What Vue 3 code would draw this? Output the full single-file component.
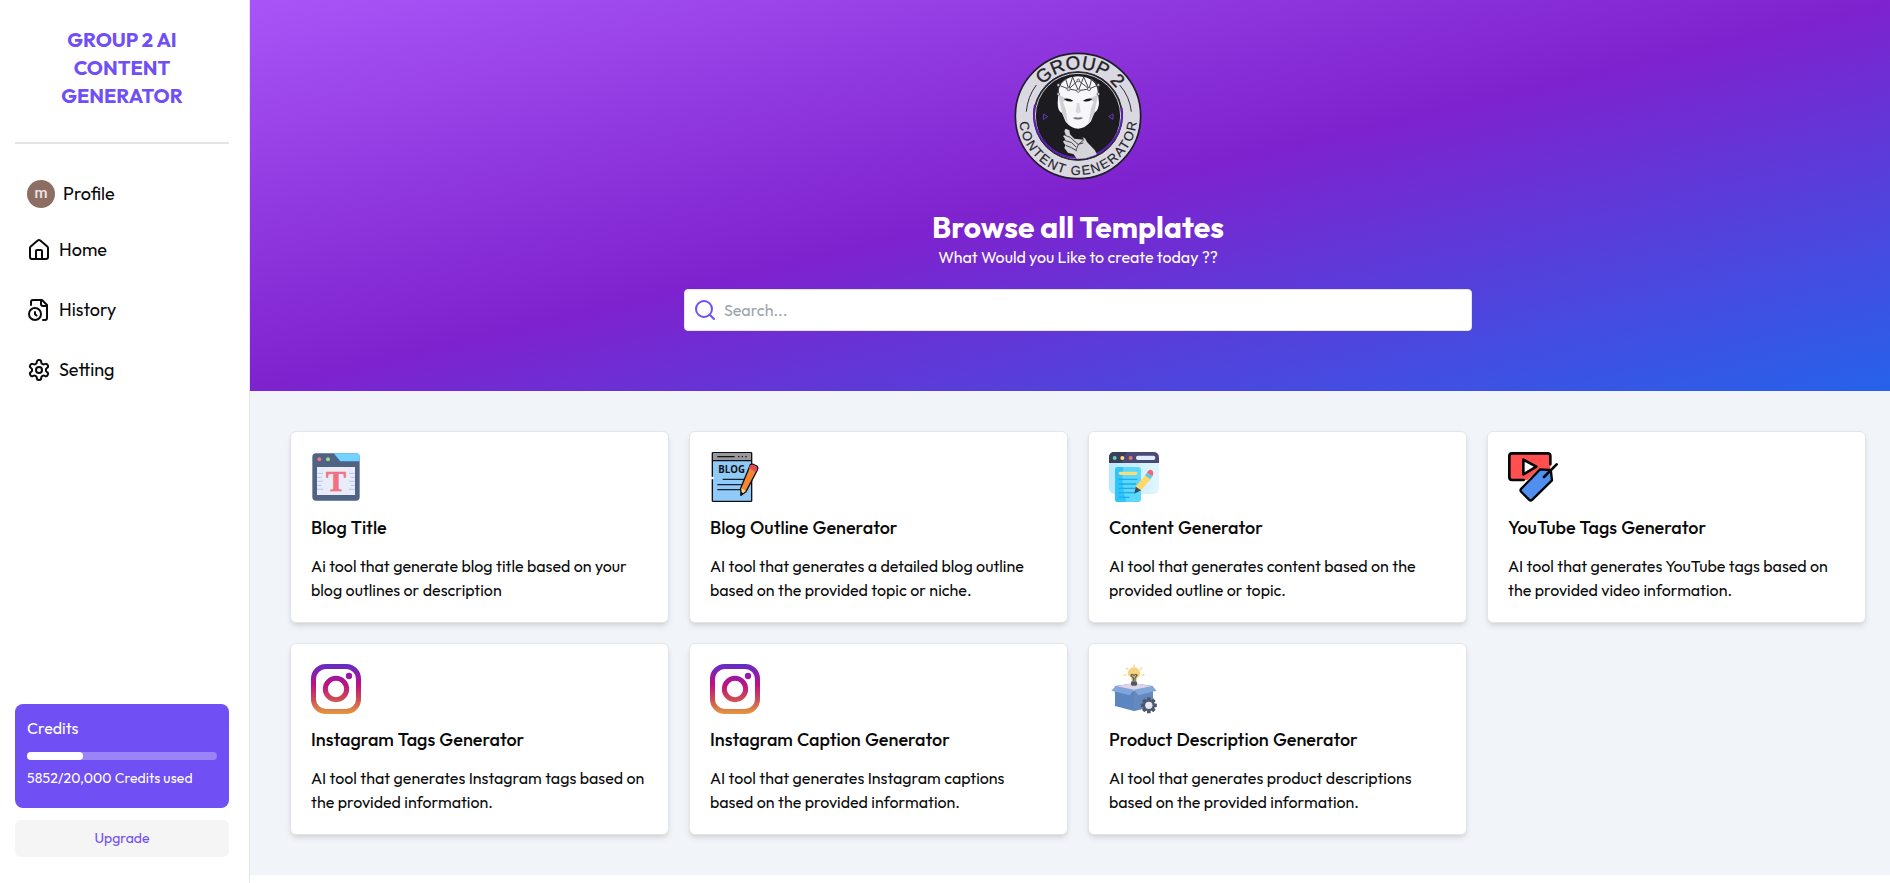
<script setup>
const nav = [
  {
    label: 'Home',
    paths: [
      'M15 21v-8a1 1 0 0 0-1-1h-4a1 1 0 0 0-1 1v8',
      'M3 10a2 2 0 0 1 .709-1.528l7-5.999a2 2 0 0 1 2.582 0l7 5.999A2 2 0 0 1 21 10v9a2 2 0 0 1-2 2H5a2 2 0 0 1-2-2z',
    ],
  },
  {
    label: 'History',
    paths: [
      'M16 22h2a2 2 0 0 0 2-2V7l-5-5H6a2 2 0 0 0-2 2v3',
      'M14 2v4a2 2 0 0 0 2 2h4',
      'M2 16a6 6 0 1 0 12 0a6 6 0 1 0-12 0',
      'M9.5 17.5 8 16.25V14',
    ],
  },
  {
    label: 'Setting',
    paths: [
      'M12.22 2h-.44a2 2 0 0 0-2 2v.18a2 2 0 0 1-1 1.73l-.43.25a2 2 0 0 1-2 0l-.15-.08a2 2 0 0 0-2.73.73l-.22.38a2 2 0 0 0 .73 2.73l.15.1a2 2 0 0 1 1 1.72v.51a2 2 0 0 1-1 1.74l-.15.09a2 2 0 0 0-.73 2.73l.22.38a2 2 0 0 0 2.73.73l.15-.08a2 2 0 0 1 2 0l.43.25a2 2 0 0 1 1 1.73V20a2 2 0 0 0 2 2h.44a2 2 0 0 0 2-2v-.18a2 2 0 0 1 1-1.73l.43-.25a2 2 0 0 1 2 0l.15.08a2 2 0 0 0 2.73-.73l.22-.39a2 2 0 0 0-.73-2.73l-.15-.08a2 2 0 0 1-1-1.74v-.5a2 2 0 0 1 1-1.74l.15-.09a2 2 0 0 0 .73-2.73l-.22-.38a2 2 0 0 0-2.73-.73l-.15.08a2 2 0 0 1-2 0l-.43-.25a2 2 0 0 1-1-1.73V4a2 2 0 0 0-2-2z',
      'M9 12a3 3 0 1 0 6 0a3 3 0 1 0-6 0',
    ],
  },
]

const credits = { used: 5852, total: 20000 }

const templates = [
  { icon: 'title', name: 'Blog Title', lines: ['Ai tool that generate blog title based on your', 'blog outlines or description'] },
  { icon: 'blog', name: 'Blog Outline Generator', lines: ['AI tool that generates a detailed blog outline', 'based on the provided topic or niche.'] },
  { icon: 'content', name: 'Content Generator', lines: ['AI tool that generates content based on the', 'provided outline or topic.'] },
  { icon: 'youtube', name: 'YouTube Tags Generator', lines: ['AI tool that generates YouTube tags based on', 'the provided video information.'] },
  { icon: 'instagram', name: 'Instagram Tags Generator', lines: ['AI tool that generates Instagram tags based on', 'the provided information.'] },
  { icon: 'instagram', name: 'Instagram Caption Generator', lines: ['AI tool that generates Instagram captions', 'based on the provided information.'] },
  { icon: 'product', name: 'Product Description Generator', lines: ['AI tool that generates product descriptions', 'based on the provided information.'] },
]

const gearTeeth = [0, 45, 90, 135, 180, 225, 270, 315]
</script>

<template>
  <div class="page">
    <aside class="sidebar">
      <h2 class="brand">GROUP 2 AI<br />CONTENT<br />GENERATOR</h2>
      <hr class="rule" />
      <nav class="nav">
        <a class="profile"><span class="avatar">m</span><span>Profile</span></a>
        <a v-for="item in nav" :key="item.label" class="nav-item">
          <svg class="nav-icon" viewBox="0 0 24 24"><path v-for="d in item.paths" :key="d" :d="d" /></svg>
          <span>{{ item.label }}</span>
        </a>
      </nav>
      <div class="usage">
        <div class="credits">
          <div class="credits-title">Credits</div>
          <div class="track"><div class="fill" :style="{ width: (credits.used / credits.total) * 100 + '%' }"></div></div>
          <div class="credits-text">{{ credits.used }}/20,000 Credits used</div>
        </div>
        <button class="upgrade">Upgrade</button>
      </div>
    </aside>

    <main class="main">
      <header class="hero">
        <svg class="logo" viewBox="40 34 390 390">
          <defs>
            <path id="arc-top" d="M94 229A141 141 0 0 1 376 229" />
            <path id="arc-bottom" d="M58 229A177 177 0 0 0 412 229" />
            <clipPath id="disc"><circle cx="235" cy="229" r="128" /></clipPath>
          </defs>
          <circle cx="235" cy="229" r="188" fill="#dad8e0" stroke="#211c2c" stroke-width="5" />
          <circle cx="235" cy="229" r="133" fill="#1c1b20" stroke="#29252f" stroke-width="3" />
          <circle cx="235" cy="229" r="128" fill="none" stroke="#d3d0da" stroke-width="3" />
          <path d="M106 195A132 132 0 1 0 366 205" fill="none" stroke="#5b1fb4" stroke-width="6" />
          <g clip-path="url(#disc)">
            <path d="M176 160Q180 112 235 110Q292 112 295 160L298 190Q297 212 284 220L274 245Q256 267 236 267Q214 266 198 246L187 220Q174 214 174 190Z" fill="#f7f7f9" />
            <path d="M176 165L187 220L205 252L198 208L190 186L205 178ZM295 165L284 220L266 252L274 208L282 186L266 178Z" fill="#d0cfd5" />
            <path d="M192 178Q207 174 221 183Q207 190 192 178ZM250 183Q264 174 279 178Q264 190 250 183Z" fill="#18171c" />
            <path d="M232 190L228 216L235 222L243 216L239 190" fill="#d9d8dc" />
            <path d="M219 235Q228 231 235 234Q243 231 251 235Q235 244 219 235Z" fill="#77747f" />
            <path d="M176 163V136L198 118L207 148L219 112L236 153L252 112L268 148L276 118L296 136V163M176 136L207 148L236 122L268 148L296 136M207 148L236 153L268 148" fill="none" stroke="#47434f" stroke-width="3" />
            <g fill="#dddbe2" stroke="#47434f" stroke-width="2">
              <circle cx="176" cy="136" r="4" /><circle cx="176" cy="163" r="4" /><circle cx="207" cy="148" r="5" /><circle cx="236" cy="153" r="5" />
              <circle cx="268" cy="148" r="5" /><circle cx="296" cy="136" r="4" /><circle cx="296" cy="163" r="4" /><circle cx="236" cy="122" r="4" />
            </g>
            <path d="M198 267L209 272L211 284L224 297L253 300L248 292L257 297L262 307L285 331L292 344L270 358H232L222 344L205 339L194 325L197 316L190 306L197 299L190 289L198 285L194 274Z" fill="#d5d4d9" />
            <path d="M196 287L212 293L235 314L251 310M194 302L216 309L229 322M198 317L215 324L232 334M253 300L236 315L229 331" fill="none" stroke="#47444d" stroke-width="3" />
          </g>
          <path d="M131 223V239L144 231ZM340 223V239L327 231Z" fill="none" stroke="#6f35bd" stroke-width="3" />
          <path d="M110 136Q84 170 80 216M360 136Q390 170 395 216" fill="none" stroke="#302c37" stroke-width="3" />
          <text class="logo-top"><textPath href="#arc-top" startOffset="51.5%" text-anchor="middle" textLength="254">GROUP 2</textPath></text>
          <text class="logo-bottom"><textPath href="#arc-bottom" startOffset="50%" text-anchor="middle" textLength="518">CONTENT GENERATOR</textPath></text>
        </svg>
        <h1>Browse all Templates</h1>
        <p>What Would you Like to create today ??</p>
        <div class="search">
          <svg viewBox="0 0 24 24"><circle cx="11" cy="11" r="8" /><path d="m21 21-4.3-4.3" /></svg>
          <input type="text" placeholder="Search..." />
        </div>
      </header>

      <section class="grid">
        <article v-for="t in templates" :key="t.name" class="card">
          <svg v-if="t.icon === 'title'" class="icon" viewBox="0 0 150 150">
            <rect x="4" y="4" width="142" height="142" rx="11" fill="#4f6384" />
            <path d="M68 4H136Q146 4 146 14V28H88Z" fill="#73d2ff" />
            <circle cx="25" cy="22" r="6" fill="#f4737f" /><circle cx="51" cy="22" r="6" fill="#a5d78a" />
            <rect x="18" y="45" width="114" height="84" fill="#e9edf9" />
            <path d="M18 64H36M18 76H32M18 88H36M18 100H32M18 112H36M114 64H132M118 76H132M114 88H132M118 100H132M114 112H132" stroke="#c0cdf0" stroke-width="4" />
            <text class="icon-t" x="75" y="116" text-anchor="middle">T</text>
          </svg>
          <svg v-else-if="t.icon === 'blog'" class="icon" viewBox="0 0 150 150">
            <rect x="7" y="2" width="118" height="146" rx="2" fill="#90caf9" stroke="#111" stroke-width="4" />
            <path d="M9 4H123V25H9Z" fill="#99999c" />
            <path d="M7 26H125M22 14H74M84 14H88M95 14H99M106 14H110" stroke="#111" stroke-width="4" />
            <path d="M3 78H12" stroke="#eaf6ff" stroke-width="7" />
            <text class="icon-blog" x="25" y="64" textLength="80">BLOG</text>
            <path d="M38 82H108M22 98H98M22 113H92" stroke="#15202b" stroke-width="4" />
            <path d="M121 38Q127 34 134 39L141 42Q145 47 142 54L108 119L93 130L92 109Z" fill="#f58634" stroke="#111" stroke-width="4" stroke-linejoin="round" />
            <path d="M121 40Q127 36 134 41Q144 45 140 54L137 59L116 49Z" fill="#e8475c" />
            <path d="M94 109L107 116L97 126Z" fill="#ffd68a" /><path d="M93 121L102 124L91 132Z" fill="#111" />
          </svg>
          <svg v-else-if="t.icon === 'content'" class="icon" viewBox="0 0 150 150">
            <defs><linearGradient id="sheet"><stop stop-color="#b9e8fd" /><stop offset="1" stop-color="#e2f5ff" /></linearGradient></defs>
            <rect width="150" height="126" rx="17" fill="url(#sheet)" />
            <path d="M0 33V17Q0 0 17 0H133Q150 0 150 17V33Z" fill="#494b75" /><path d="M0 33V17Q0 0 17 0H55Q42 15 40 33Z" fill="#3a3c60" />
            <circle cx="17" cy="18" r="6" fill="#60d98d" /><circle cx="40" cy="18" r="6" fill="#ffe07a" /><circle cx="65" cy="18" r="6" fill="#f06c76" />
            <rect x="81" y="11" width="58" height="13" rx="6" fill="#e2ecff" />
            <rect x="18" y="45" width="78" height="105" rx="10" fill="#5bd9fd" />
            <path d="M43 45H28Q18 45 18 55V140Q18 150 28 150H52Q35 100 43 45Z" fill="#2ec6fa" />
            <rect x="29" y="59" width="56" height="10" rx="5" fill="#f8dc7b" />
            <path d="M30 82H84M30 96H80M30 109H76M30 122H74M30 136H60" stroke="#22a8eb" stroke-width="4" stroke-linecap="round" />
            <path d="M110 68L126 80L96 115L80 104Z" fill="#ffd766" /><path d="M80 104L96 115L76 125Z" fill="#484760" />
            <path d="M108 70L114 62L130 73L124 82Z" fill="#55cde9" /><path d="M114 62Q119 50 129 55Q136 61 130 73Z" fill="#f36770" />
          </svg>
          <svg v-else-if="t.icon === 'youtube'" class="icon" viewBox="0 0 150 150">
            <path d="M12 4H119Q127 4 127 12V55L92 52L58 84H12Q4 84 4 76V12Q4 4 12 4Z" fill="#ff4f4f" />
            <path d="M127 37V12Q127 4 119 4H12Q4 4 4 12V76Q4 84 12 84H47" fill="none" stroke="#060606" stroke-width="8" stroke-linecap="round" />
            <path d="M46 23L85 44L46 67Z" fill="#fff" stroke="#060606" stroke-width="8" stroke-linejoin="round" />
            <path d="M96 52L126 54Q129 54 129 59L132 85L73 143Q68 148 63 143L40 120Q35 115 40 110Z" fill="#508ff0" stroke="#060606" stroke-width="7" stroke-linejoin="round" />
            <path d="M108 75L146 37" stroke="#060606" stroke-width="8" stroke-linecap="round" />
          </svg>
          <svg v-else-if="t.icon === 'instagram'" class="icon" viewBox="0 0 150 150">
            <defs>
              <linearGradient id="insta" gradientUnits="userSpaceOnUse" x1="0" y1="0" x2="0" y2="150">
                <stop stop-color="#612fc6" /><stop offset=".18" stop-color="#8a1db1" /><stop offset=".42" stop-color="#c0117f" /><stop offset=".7" stop-color="#cc4a58" /><stop offset="1" stop-color="#e5993f" />
              </linearGradient>
            </defs>
            <rect x="7.5" y="7.5" width="135" height="135" rx="37" fill="none" stroke="url(#insta)" stroke-width="15" />
            <circle cx="75" cy="75" r="32" fill="none" stroke="url(#insta)" stroke-width="15" />
            <circle cx="114" cy="36" r="9.5" fill="url(#insta)" />
          </svg>
          <svg v-else class="icon" viewBox="0 0 150 150">
            <path d="M75 3V8M52 12L56 16M98 12L94 16M45 33H50M100 33H105" stroke="#f8df9d" stroke-width="5" stroke-linecap="round" />
            <path d="M18 66L75 58L132 66V127L75 141L18 126Z" fill="#5b86c2" /><path d="M75 80L132 66V127L75 141Z" fill="#6589bd" />
            <path d="M20 67L75 57L130 67L75 80Z" fill="#dfd5e8" />
            <path d="M20 66L75 77L62 94L7 80ZM130 66L75 77L88 94L143 80Z" fill="#82a6da" />
            <path d="M67 50L66 40Q56 34 56 29A19 19 0 0 1 94 29Q94 35 85 41L83 50Z" fill="#f8d27e" />
            <path d="M73 52V42L66 34Q69 28 75 35Q81 28 84 34L78 42V52" fill="none" stroke="#636657" stroke-width="4" />
            <rect x="66" y="52" width="18" height="13" rx="4" fill="#4f5862" />
            <g fill="#4c586d"><rect v-for="a in gearTeeth" :key="a" x="114" y="100" width="11" height="12" rx="2" :transform="`rotate(${a} 119.500 124)`" /><circle cx="119.500" cy="124" r="18" /></g>
            <circle cx="119.500" cy="124" r="11" fill="#e8e6f3" />
          </svg>
          <h3>{{ t.name }}</h3>
          <p><span v-for="line in t.lines" :key="line">{{ line }}</span></p>
        </article>
      </section>
    </main>
  </div>
</template>

<style>
html, body { margin: 0; background: #fff; overflow: hidden; }
</style>

<style scoped>
.page { display: flex; height: 883px; overflow: hidden; font-family: Outfit, Lato, sans-serif; color: #0a0a0a; box-sizing: border-box; }
.page * { box-sizing: border-box; }
h1, h2, h3, p { margin: 0; }
.sidebar { flex: none; display: flex; flex-direction: column; width: 250px; padding: 26px 20px 26px 15px; border-right: 1px solid #e5e5e5; background: #fff; }
.brand { color: #704ff5; font-size: 20px; line-height: 28px; font-weight: 700; text-align: center; }
.rule { width: 100%; height: 2px; margin: 32px 0; border: 0; background: #e5e5e5; }
.nav { display: flex; flex-direction: column; padding-left: 12px; font-size: 18px; line-height: 28px; }
.profile { display: flex; align-items: center; gap: 8px; height: 36px; margin-bottom: 8px; }
.avatar { width: 28px; height: 28px; border-radius: 50%; background: #8d6e63; color: #eee7e4; font: 500 15px/26px Roboto, sans-serif; text-align: center; }
.nav-item { display: flex; align-items: center; gap: 8px; height: 60px; }
.nav-icon { width: 24px; height: 24px; fill: none; stroke: #0a0a0a; stroke-width: 2; stroke-linecap: round; stroke-linejoin: round; }
.usage { display: flex; flex-direction: column; gap: 12px; margin-top: auto; }
.credits { height: 104px; padding: 12px; border-radius: 8px; background: #704ff5; color: #fff; }
.credits-title { font-size: 16px; line-height: 24px; }
.track { height: 8px; margin: 12px 0 8px; border-radius: 4px; background: #9b83f8; }
.fill { height: 8px; border-radius: 4px; background: #fff; }
.credits-text { font-size: 14px; line-height: 20px; letter-spacing: .12px; }
.upgrade { height: 37px; padding: 0 0 2px; border: 0; border-radius: 6px; background: #f5f5f5; color: #704ff5; font: 400 14px/20px Outfit, Lato, sans-serif; }
.main { flex: none; width: 1656px; }
.hero { display: flex; flex-direction: column; align-items: center; height: 391px; padding-top: 51px; background: linear-gradient(to bottom right, #a855f7, #7e22ce, #2563eb); color: #fff; }
.logo { width: 130px; height: 130px; margin-bottom: 28px; flex: none; }
.logo-top { font: 56px "Liberation Sans", sans-serif; fill: #242129; stroke: #242129; stroke-width: 1px; }
.logo-bottom { font: 39px "Liberation Sans", sans-serif; fill: #242129; stroke: #242129; stroke-width: .5px; }
h1 { font-size: 30px; line-height: 36px; font-weight: 700; letter-spacing: .1px; }
.hero p { font-size: 16px; line-height: 24px; }
.search { display: flex; align-items: center; gap: 7px; width: 788px; height: 42px; margin-top: 20px; padding: 0 8px; border: 1px solid #e5e5e5; border-radius: 4px; background: #fff; }
.search svg { flex: none; width: 24px; height: 24px; fill: none; stroke: #704ff5; stroke-width: 2; stroke-linecap: round; }
.search input { flex: 1; height: 24px; padding: 0; border: 0; outline: 0; background: transparent; font: 16px/24px Outfit, Lato, sans-serif; }
.search input::placeholder { color: #9ca3af; }
.grid { display: grid; grid-template-columns: repeat(4, 1fr); gap: 20px; padding: 40px; background: #f1f5f9; }
.card { display: flex; flex-direction: column; gap: 12px; height: 192px; padding: 20px; border: 1px solid #e5e5e5; border-radius: 6px; background: #fff; box-shadow: 0 4px 6px -1px rgba(0, 0, 0, .1), 0 2px 4px -2px rgba(0, 0, 0, .1); }
.icon { width: 50px; height: 50px; flex: none; }
.icon-t { font: bold 90px "Liberation Serif", serif; fill: #f2717d; stroke: #f2717d; stroke-width: 2px; }
.icon-blog { font: bold 29px "Open Sans", sans-serif; fill: #111; }
.card h3 { font-size: 18px; line-height: 28px; font-weight: 500; word-spacing: .6px; }
.card p { font-size: 16px; line-height: 24px; word-spacing: .1px; }
.card p span { display: block; white-space: nowrap; }
</style>
